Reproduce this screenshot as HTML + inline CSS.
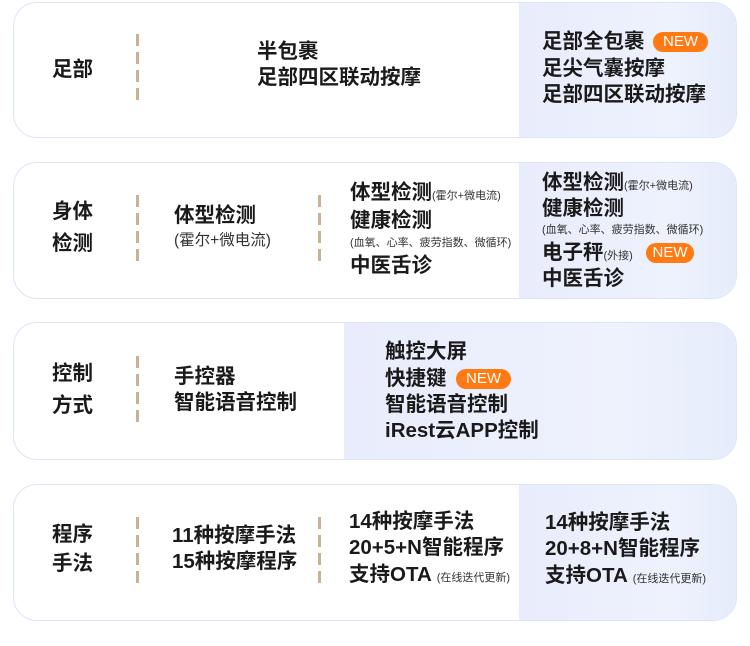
<!DOCTYPE html>
<html><head><meta charset="utf-8"><style>
*{margin:0;padding:0;box-sizing:border-box}
body{width:750px;height:646px;background:#fff;position:relative;overflow:hidden;font-family:"Liberation Sans","Noto Sans CJK SC",sans-serif;color:#1a1a1a}
.card{position:absolute;left:13px;width:724px;border:1.5px solid #dbe5fa;border-radius:24px;background:#fff;overflow:hidden}
.hl{position:absolute;top:0;bottom:0;right:0;background:linear-gradient(90deg,#e9ecfc,#eef2fd 70%,#e6ecfb)}
.t{position:absolute;font-size:20.5px;font-weight:bold;line-height:26px;white-space:nowrap}
.s{font-size:11px;font-weight:normal;color:#333}
.m{position:absolute;font-size:15.5px;line-height:18px;white-space:nowrap;color:#333}
.xs{position:absolute;font-size:11px;line-height:14px;white-space:nowrap;color:#333}
.new{position:absolute;height:20px;background:#ff7a12;color:#fff;border-radius:10px;font-size:15px;line-height:20px;text-align:center;font-weight:normal}
.dv{position:absolute;width:2.5px;background:repeating-linear-gradient(180deg,#c9b294 0 12px,transparent 12px 18px)}
</style></head><body>

<div class="card" style="top:2px;height:136px"><div class="hl" style="left:505px"></div></div>
<div class="card" style="top:162px;height:137px"><div class="hl" style="left:505px"></div></div>
<div class="card" style="top:322px;height:138px"><div class="hl" style="left:330px"></div></div>
<div class="card" style="top:484px;height:137px"><div class="hl" style="left:505px"></div></div>

<div class="dv" style="left:136px;top:34px;height:68px"></div>
<div class="dv" style="left:136px;top:195px;height:68px"></div>
<div class="dv" style="left:318px;top:195px;height:68px"></div>
<div class="dv" style="left:136px;top:356px;height:68px"></div>
<div class="dv" style="left:136px;top:517px;height:68px"></div>
<div class="dv" style="left:318px;top:517px;height:68px"></div>

<!-- card1 -->
<div class="t" style="left:52px;top:57px">足部</div>
<div class="t" style="left:257px;top:39px">半包裹</div>
<div class="t" style="left:257px;top:65px">足部四区联动按摩</div>
<div class="t" style="left:542px;top:29px">足部全包裹</div>
<div class="new" style="left:653px;top:32px;width:55px">NEW</div>
<div class="t" style="left:542px;top:56px">足尖气囊按摩</div>
<div class="t" style="left:542px;top:82px">足部四区联动按摩</div>

<!-- card2 -->
<div class="t" style="left:52px;top:199px">身体</div>
<div class="t" style="left:52px;top:231px">检测</div>
<div class="t" style="left:174px;top:203px">体型检测</div>
<div class="m" style="left:174px;top:232px">(霍尔+微电流)</div>
<div class="t" style="left:350px;top:180px">体型检测<span class="s">(霍尔+微电流)</span></div>
<div class="t" style="left:350px;top:208px">健康检测</div>
<div class="xs" style="left:350px;top:236px">(血氧、心率、疲劳指数、微循环)</div>
<div class="t" style="left:350px;top:253px">中医舌诊</div>
<div class="t" style="left:542px;top:170px">体型检测<span class="s">(霍尔+微电流)</span></div>
<div class="t" style="left:542px;top:196px">健康检测</div>
<div class="xs" style="left:542px;top:223px">(血氧、心率、疲劳指数、微循环)</div>
<div class="t" style="left:542px;top:240px">电子秤<span class="s">(外接)</span></div>
<div class="new" style="left:646px;top:243px;width:48px">NEW</div>
<div class="t" style="left:542px;top:266px">中医舌诊</div>

<!-- card3 -->
<div class="t" style="left:52px;top:361px">控制</div>
<div class="t" style="left:52px;top:393px">方式</div>
<div class="t" style="left:174px;top:364px">手控器</div>
<div class="t" style="left:174px;top:390px">智能语音控制</div>
<div class="t" style="left:385px;top:339px">触控大屏</div>
<div class="t" style="left:385px;top:366px">快捷键</div>
<div class="new" style="left:456px;top:369px;width:55px">NEW</div>
<div class="t" style="left:385px;top:392px">智能语音控制</div>
<div class="t" style="left:385px;top:418px">iRest云APP控制</div>

<!-- card4 -->
<div class="t" style="left:52px;top:522px">程序</div>
<div class="t" style="left:52px;top:551px">手法</div>
<div class="t" style="left:172px;top:523px">11种按摩手法</div>
<div class="t" style="left:172px;top:549px">15种按摩程序</div>
<div class="t" style="left:349px;top:509px">14种按摩手法</div>
<div class="t" style="left:349px;top:535px">20+5+N智能程序</div>
<div class="t" style="left:349px;top:562px">支持OTA <span class="s">(在线迭代更新)</span></div>
<div class="t" style="left:545px;top:510px">14种按摩手法</div>
<div class="t" style="left:545px;top:536px">20+8+N智能程序</div>
<div class="t" style="left:545px;top:563px">支持OTA <span class="s">(在线迭代更新)</span></div>
</body></html>
